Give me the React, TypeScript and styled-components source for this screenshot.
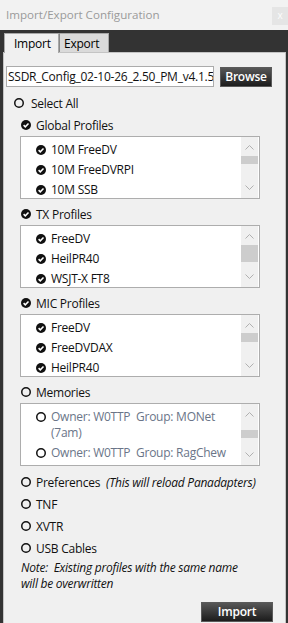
import styled, { createGlobalStyle } from 'styled-components';

const GlobalStyle = createGlobalStyle`
  html, body {
    margin: 0;
    padding: 0;
    background: #333333;
  }
  body {
    font-family: "Open Sans", "Noto Sans", sans-serif;
    font-size: 12px;
    letter-spacing: -0.25px;
    color: #111;
  }
`;

const globalProfiles = ['10M FreeDV', '10M FreeDVRPI', '10M SSB'];
const txProfiles = ['FreeDV', 'HeilPR40', 'WSJT-X FT8'];
const micProfiles = ['FreeDV', 'FreeDVDAX', 'HeilPR40'];
const memories = ['Owner: W0TTP  Group: MONet (7am)', 'Owner: W0TTP  Group: RagChew'];

function CheckIcon() {
  return (
    <svg width="10" height="10" viewBox="0 0 10 10">
      <circle cx="5" cy="5" r="5" fill="#111" />
      <path d="M2.6 5.1 L4.3 6.8 L7.5 3.4" stroke="#fff" strokeWidth="1.5" fill="none" />
    </svg>
  );
}

function RadioIcon() {
  return (
    <svg width="10" height="10" viewBox="0 0 10 10">
      <circle cx="5" cy="5" r="4.25" stroke="#111" strokeWidth="1.5" fill="none" />
    </svg>
  );
}

function Chevron({ down }: { down?: boolean }) {
  return (
    <svg width="9" height="5" viewBox="0 0 9 5">
      <path d={down ? 'M0.5 0.5 L4.5 4.5 L8.5 0.5' : 'M0.5 4.5 L4.5 0.5 L8.5 4.5'} stroke="#b0b0b0" strokeWidth="1" fill="none" />
    </svg>
  );
}

function Option({ label, note }: { label: string; note?: string }) {
  return (
    <OptionRow>
      <RadioIcon />
      <span>{label}</span>
      {note && <NoteInline>{note}</NoteInline>}
    </OptionRow>
  );
}

function ListBox({ items, checked, disabled, thumbTop, thumbHeight }: {
  items: string[]; checked?: boolean; disabled?: boolean; thumbTop: number; thumbHeight: number;
}) {
  return (
    <List>
      <ListItems>
        {items.map((label) => (
          <ListItem key={label} $disabled={disabled}>
            <IconSlot>{checked ? <CheckIcon /> : <RadioIcon />}</IconSlot>
            <span>{label}</span>
          </ListItem>
        ))}
      </ListItems>
      <ScrollBar>
        <ArrowSlot><Chevron /></ArrowSlot>
        <Thumb style={{ top: thumbTop, height: thumbHeight }} />
        <ArrowSlot><Chevron down /></ArrowSlot>
      </ScrollBar>
    </List>
  );
}

function Section({ title, checked, ...list }: {
  title: string; checked?: boolean; items: string[]; disabled?: boolean; thumbTop: number; thumbHeight: number;
}) {
  return (
    <SectionBlock>
      <SectionHeading>
        {checked ? <CheckIcon /> : <RadioIcon />}
        <span>{title}</span>
      </SectionHeading>
      <ListBox checked={checked} {...list} />
    </SectionBlock>
  );
}

export default function App() {
  return (
    <Window>
      <GlobalStyle />
      <TitleBar>
        <Title>Import/Export Configuration</Title>
        <CloseButton>x</CloseButton>
      </TitleBar>
      <Frame>
        <Tabs>
          <Tab $active>Import</Tab>
          <Tab>Export</Tab>
        </Tabs>
        <Panel>
          <FileRow>
            <FileInput readOnly value="SSDR_Config_02-10-26_2.50_PM_v4.1.5.ssdr_cfg" />
            <DarkButton>Browse</DarkButton>
          </FileRow>
          <SelectAll>
            <RadioIcon />
            <span>Select All</span>
          </SelectAll>
          <Section title="Global Profiles" checked items={globalProfiles} thumbTop={19} thumbHeight={8} />
          <Section title="TX Profiles" checked items={txProfiles} thumbTop={19} thumbHeight={17} />
          <Section title="MIC Profiles" checked items={micProfiles} thumbTop={18} thumbHeight={9} />
          <Section title="Memories" items={memories} disabled thumbTop={26} thumbHeight={8} />
          <Options>
            <Option label="Preferences" note="(This will reload Panadapters)" />
            <Option label="TNF" />
            <Option label="XVTR" />
            <Option label="USB Cables" />
          </Options>
          <Note>Note:  Existing profiles with the same name will be overwritten</Note>
          <Footer>
            <DarkButton $wide>Import</DarkButton>
          </Footer>
        </Panel>
      </Frame>
    </Window>
  );
}

const Window = styled.div`
  width: 288px;
  height: 623px;
  overflow: hidden;
  display: flex;
  flex-direction: column;
  background: #333333;
`;
const TitleBar = styled.div`
  height: 30px;
  flex-shrink: 0;
  display: flex;
  align-items: flex-start;
  justify-content: space-between;
  background: #f2f2f2;
`;
const Title = styled.div`
  padding: 6px 0 0 6px;
  font-size: 11.6px;
  letter-spacing: 0;
  color: #9a9a9a;
  line-height: 18px;
`;
const CloseButton = styled.div`
  margin-top: 7px;
  width: 16px;
  height: 18px;
  background: #e5e5e5;
  color: #fcfcfc;
  font-size: 10px;
  line-height: 17px;
  text-align: center;
`;
const Frame = styled.div`
  flex: 1;
  display: flex;
  flex-direction: column;
  padding: 3px 2px 0 3px;
  min-height: 0;
`;
const Tabs = styled.div`
  display: flex;
  height: 19px;
  padding-left: 1px;
`;
const Tab = styled.div<{ $active?: boolean }>`
  width: ${(p) => (p.$active ? '55px' : '50px')};
  box-sizing: border-box;
  padding-left: ${(p) => (p.$active ? '9px' : '4px')};
  line-height: 19px;
  font-size: 12px;
  color: #000;
  background: ${(p) => (p.$active ? '#f0f0f0' : '#dadada')};
  border: 1px solid #a8a8a8;
  border-bottom: none;
  margin-bottom: ${(p) => (p.$active ? '-1px' : '0')};
  position: relative;
  z-index: ${(p) => (p.$active ? 1 : 0)};
  & + & {
    border-left: 1px solid #888;
  }
`;
const Panel = styled.div`
  flex: 1;
  display: flex;
  flex-direction: column;
  background: #f0f0f0;
  border: 1px solid #c4c4c4;
  border-bottom: none;
  padding: 13px 12px 0 2px;
`;
const FileRow = styled.div`
  display: flex;
  align-items: center;
  gap: 6px;
  height: 21px;
`;
const FileInput = styled.input`
  width: 208px;
  height: 21px;
  box-sizing: border-box;
  border: 1px solid #ababab;
  background: #fff;
  font-family: inherit;
  font-size: 12px;
  letter-spacing: -0.25px;
  color: #111;
  padding: 0 0 0 1px;
  outline: none;
`;
const DarkButton = styled.div<{ $wide?: boolean }>`
  width: ${(p) => (p.$wide ? '72px' : '52px')};
  height: 20px;
  box-sizing: border-box;
  border: 1px solid #5a5a5a;
  background: linear-gradient(#575757, #1c1c1c);
  color: #fff;
  font-size: 12px;
  font-weight: 600;
  line-height: 18px;
  text-align: center;
`;
const SelectAll = styled.div`
  display: flex;
  align-items: center;
  gap: 7px;
  height: 22px;
  margin-top: 5px;
  padding-left: 8px;
`;
const SectionBlock = styled.div`
  display: flex;
  flex-direction: column;
  margin-bottom: 4px;
`;
const SectionHeading = styled.div`
  display: flex;
  align-items: center;
  gap: 5px;
  height: 22px;
  padding-left: 15px;
`;
const List = styled.div`
  position: relative;
  margin-left: 14px;
  width: 240px;
  height: 63px;
  box-sizing: border-box;
  border: 1px solid #adadad;
  background: #fff;
  display: flex;
  overflow: hidden;
`;
const ListItems = styled.div`
  flex: 1;
  padding-top: 3px;
`;
const ListItem = styled.div<{ $disabled?: boolean }>`
  display: flex;
  align-items: flex-start;
  padding: 2px 0 2px 15px;
  line-height: 16px;
  color: ${(p) => (p.$disabled ? '#6a7588' : '#111')};
  white-space: pre-wrap;
`;
const IconSlot = styled.span`
  display: flex;
  height: 16px;
  align-items: center;
  margin-right: 5px;
  flex-shrink: 0;
`;
const ScrollBar = styled.div`
  position: relative;
  width: 17px;
  margin-right: 1px;
  background: #f0f0f0;
  display: flex;
  flex-direction: column;
  justify-content: space-between;
  padding: 7px 0;
`;
const ArrowSlot = styled.div`
  display: flex;
  justify-content: center;
  height: 7px;
  align-items: center;
`;
const Thumb = styled.div`
  position: absolute;
  left: 0;
  right: 0;
  background: #cdcdcd;
`;
const Options = styled.div`
  display: flex;
  flex-direction: column;
  margin-top: 1px;
`;
const OptionRow = styled.div`
  display: flex;
  align-items: center;
  gap: 5px;
  height: 22px;
  padding-left: 15px;
`;
const NoteInline = styled.span`
  font-style: italic;
  margin-left: 1px;
`;
const Note = styled.div`
  font-style: italic;
  padding: 0 32px 0 15px;
  line-height: 16px;
  white-space: pre-wrap;
  margin-top: 1px;
`;
const Footer = styled.div`
  display: flex;
  justify-content: flex-end;
  margin-top: 10px;
`;
